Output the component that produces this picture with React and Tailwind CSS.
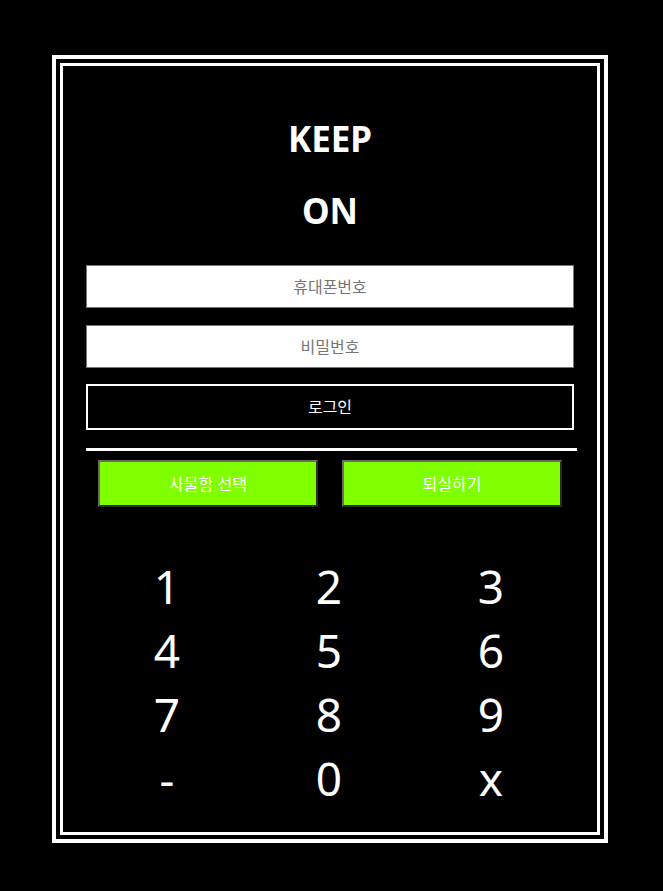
import React from 'react';

const keys = ['1', '2', '3', '4', '5', '6', '7', '8', '9', '-', '0', 'x'];

const App = () => {
    return (
        <div className="min-h-[891px] bg-black pt-[55px] pl-[52px] font-['Noto_Sans','Noto_Sans_CJK_KR',sans-serif]">
            <div className="w-[556px] h-[788px] border-4 border-white p-1">
                <div className="h-full border-[3px] border-white px-[23px] pt-[49px]">
                    {/* title */}
                    <div className="flex flex-col items-center gap-6 text-white font-bold text-[35px] leading-[48px]">
                        <div>KEEP</div>
                        <div>ON</div>
                    </div>

                    {/* login form */}
                    <div className="mt-[30px] flex flex-col">
                        <input
                            type="text"
                            placeholder="휴대폰번호"
                            className="w-[488px] h-[43px] bg-white border border-[#767676] text-center text-base text-black placeholder:text-[#757575] outline-none"
                        />
                        <input
                            type="password"
                            placeholder="비밀번호"
                            className="mt-[17px] w-[488px] h-[43px] bg-white border border-[#767676] text-center text-base text-black placeholder:text-[#757575] outline-none"
                        />
                        <button className="mt-4 w-[488px] h-[46px] bg-black border-2 border-white text-white text-base">
                            로그인
                        </button>
                    </div>

                    <div className="mt-[18px] w-[491px] h-[3px] bg-white" />

                    {/* green buttons */}
                    <div className="mt-[9px] w-[488px] flex justify-center gap-6">
                        <button className="w-[220px] h-[47px] bg-[#7fff00] border-2 border-t-[#6b6b6b] border-l-[#6b6b6b] border-b-[#2b2b2b] border-r-[#2b2b2b] text-white text-base">
                            사물함 선택
                        </button>
                        <button className="w-[220px] h-[47px] bg-[#7fff00] border-2 border-t-[#6b6b6b] border-l-[#6b6b6b] border-b-[#2b2b2b] border-r-[#2b2b2b] text-white text-base">
                            퇴실하기
                        </button>
                    </div>

                    {/* keypad */}
                    <div className="mt-[47px] w-[486px] grid grid-cols-3 text-white text-[46px] leading-[64px] text-center">
                        {keys.map(k => (
                            <div key={k}>{k}</div>
                        ))}
                    </div>
                </div>
            </div>
        </div>
    );
};

export default App;
